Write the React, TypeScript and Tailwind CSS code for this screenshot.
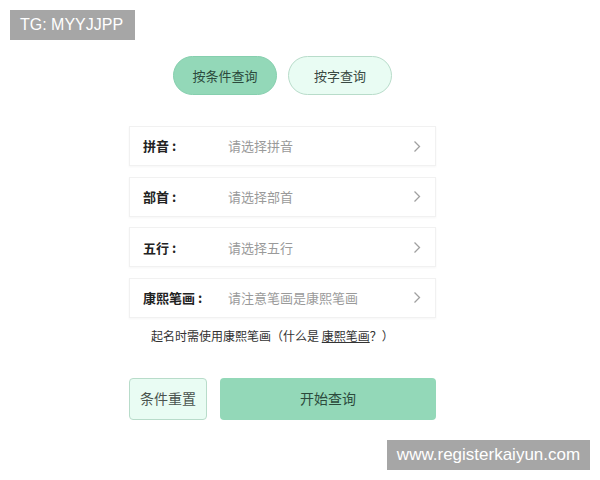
import React from "react";

const font = { fontFamily: '"Noto Sans CJK SC", "Noto Sans", sans-serif' };

function Chevron() {
  return (
    <svg width="8" height="13" viewBox="0 0 8 13" fill="none">
      <path d="M1.5 1.5 L6.5 6.5 L1.5 11.5" stroke="#a0a0a0" strokeWidth="1.3" />
    </svg>
  );
}

function Row({ label, placeholder }: { label: string; placeholder: string }) {
  return (
    <div className="flex items-center h-[40px] bg-white border border-[#f1f1f1] shadow-[0_1px_2px_rgba(0,0,0,0.04)] pl-[13px] pr-[14px]">
      <span className="w-[85px] text-[13px] font-bold text-[#222]">{label}</span>
      <span className="flex-1 text-[13px] text-[#9a9a9a]">{placeholder}</span>
      <Chevron />
    </div>
  );
}

export default function App() {
  return (
    <div className="relative w-[600px] h-[480px] bg-white overflow-hidden" style={font}>
      <div className="absolute left-[10px] top-[10px] w-[125px] h-[30px] bg-[#a6a6a6] text-white text-[16px] flex items-center pl-[10px]" style={{ fontFamily: '"Liberation Sans", Arial, sans-serif' }}>
        TG: MYYJJPP
      </div>
      <div className="absolute left-[387px] top-[440px] w-[203px] h-[30px] bg-[#a6a6a6] text-white text-[17px] flex items-center justify-center" style={{ fontFamily: '"Liberation Sans", Arial, sans-serif' }}>
        www.registerkaiyun.com
      </div>

      <div className="flex flex-col pt-[56px] pl-[129px] w-[436px]">
        <div className="flex gap-[11px] pl-[44px]">
          <div className="w-[104px] h-[39px] rounded-full bg-[#93d8b8] border border-[#86cfae] flex items-center justify-center text-[13px] text-[#2c4a3c]">
            按条件查询
          </div>
          <div className="w-[104px] h-[39px] rounded-full bg-[#e9fcf3] border border-[#b8dcca] flex items-center justify-center text-[13px] text-[#3a4a43]">
            按字查询
          </div>
        </div>

        <div className="flex flex-col gap-[10.67px] mt-[31px] w-[307px]">
          <Row label="拼音 :" placeholder="请选择拼音" />
          <Row label="部首 :" placeholder="请选择部首" />
          <Row label="五行 :" placeholder="请选择五行" />
          <Row label="康熙笔画 :" placeholder="请注意笔画是康熙笔画" />
        </div>

        <div className="mt-[9px] pl-[22px] text-[12px] text-[#333]">
          起名时需使用康熙笔画（什么是 <span className="underline">康熙笔画</span>？）
        </div>

        <div className="flex gap-[13px] mt-[33px] w-[307px]">
          <div className="w-[78px] h-[42px] rounded-[4px] bg-[#e9fcf3] border border-[#b8dcca] flex items-center justify-center text-[14px] text-[#4a544f]">
            条件重置
          </div>
          <div className="flex-1 h-[42px] rounded-[4px] bg-[#93d8b8] flex items-center justify-center text-[14px] text-[#2c4a3c]">
            开始查询
          </div>
        </div>
      </div>
    </div>
  );
}
